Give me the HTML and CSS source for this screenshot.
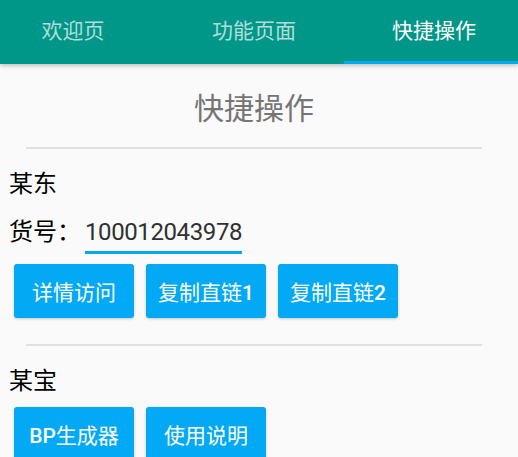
FILE: index.html
```html
<!DOCTYPE html>
<html lang="zh-CN">
<head>
<meta charset="utf-8">
<title>快捷操作</title>
<link rel="stylesheet" href="styles.css">
</head>
<body>
<header class="tabbar">
  <div class="tab tab-1">欢迎页</div>
  <div class="tab tab-2">功能页面</div>
  <div class="tab tab-3 active">快捷操作</div>
</header>
<main class="content">
  <h1 class="title">快捷操作</h1>
  <hr class="divider">
  <section class="group">
    <div class="label">某东</div>
    <div class="field-row">
      <span class="label">货号：</span>
      <span class="field">100012043978</span>
    </div>
    <div class="buttons">
      <button class="btn">详情访问</button>
      <button class="btn">复制直链<span class="latin">1</span></button>
      <button class="btn">复制直链<span class="latin">2</span></button>
    </div>
  </section>
  <hr class="divider divider-2">
  <section class="group">
    <div class="label label-tb">某宝</div>
    <div class="buttons">
      <button class="btn"><span class="latin">BP</span>生成器</button>
      <button class="btn">使用说明</button>
    </div>
  </section>
</main>
</body>
</html>
```

FILE: styles.css
```css
html, body {
  margin: 0;
  padding: 0;
}
body {
  background: #fafafa;
  font-family: Roboto, "Noto Sans CJK SC", sans-serif;
  width: 518px;
  height: 457px;
  overflow: hidden;
}
.tabbar {
  position: relative;
  z-index: 2;
  display: flex;
  height: 64px;
  background: #009688;
  box-shadow: 0 2px 4px rgba(0, 0, 0, 0.22);
}
.tab {
  box-sizing: border-box;
  display: flex;
  align-items: center;
  justify-content: center;
  height: 64px;
  padding-bottom: 7px;
  font-size: 21px;
  color: rgba(255, 255, 255, 0.7);
}
.tab-1 { width: 146px; }
.tab-2 { width: 198px; padding-left: 18px; }
.tab-3 { width: 174px; padding-left: 6px; }
.tab.active {
  color: #ffffff;
  border-bottom: 3px solid #03a9f4;
  padding-bottom: 4px;
}
.content {
  width: 508px;
}
.title {
  margin: 25px 0 0;
  font-size: 30px;
  line-height: 40px;
  font-weight: 400;
  color: #757575;
  text-align: center;
}
.divider {
  margin: 18px 0 0 26px;
  width: 456px;
  height: 2px;
  border: 0;
  background: #e0e0e0;
}
.divider-2 {
  margin-top: 26px;
}
.group {
  padding-left: 9px;
}
.label {
  font-size: 24px;
  line-height: 32px;
  color: #000000;
}
.group > .label {
  margin-top: 19px;
}
.label-tb {
  margin-top: 21px;
}
.field-row {
  display: flex;
  align-items: flex-start;
  margin-top: 16px;
}
.field {
  margin-left: 4px;
  width: 157px;
  font-size: 24px;
  line-height: 32px;
  color: #303030;
  border-bottom: 3px solid #03a9f4;
  padding-bottom: 3px;
  letter-spacing: -0.4px;
}
.buttons {
  display: flex;
  gap: 12px;
  margin-top: 10px;
  padding-left: 5px;
}
.btn {
  width: 120px;
  height: 54px;
  border: 0;
  border-radius: 3px;
  background: #03a9f4;
  color: #ffffff;
  font-family: Roboto, "Noto Sans CJK SC", sans-serif;
  font-size: 21px;
  font-weight: 400;
  padding: 0;
  box-shadow: 0 1px 3px rgba(0, 0, 0, 0.2);
}
.latin {
  font-weight: 500;
}
```
